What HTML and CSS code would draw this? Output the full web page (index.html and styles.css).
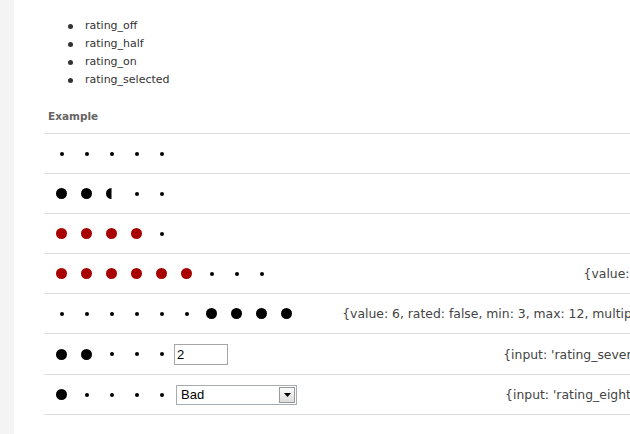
FILE: index.html
```html
<!DOCTYPE html>
<html lang="en">

<head>
    <meta charset="UTF-8">
    <meta name="viewport" content="width=device-width, initial-scale=1.0">
    <title>Rating - Examples</title>
    <link rel="stylesheet" href="styles.css">
</head>

<body>

    <div class="page">
        <!-- left gutter -->
        <div class="gutter"></div>

        <div class="content">
            <p class="intro">To change the look simply style up, by css, only the following four rating classes :</p>

            <ul class="classes">
                <li>rating_off</li>
                <li>rating_half</li>
                <li>rating_on</li>
                <li>rating_selected</li>
            </ul>

            <table class="examples">
                <thead>
                    <tr>
                        <th colspan="2">Example</th>
                    </tr>
                </thead>
                <tbody>
                    <tr>
                        <td>
                            <div class="rating">
                                <span class="dot"></span><span class="dot"></span><span class="dot"></span><span class="dot"></span><span class="dot"></span>
                            </div>
                        </td>
                        <td class="code"></td>
                    </tr>
                    <tr>
                        <td>
                            <div class="rating">
                                <span class="dot on"></span><span class="dot on"></span><span class="dot half"></span><span class="dot"></span><span class="dot"></span>
                            </div>
                        </td>
                        <td class="code"></td>
                    </tr>
                    <tr>
                        <td>
                            <div class="rating">
                                <span class="dot selected"></span><span class="dot selected"></span><span class="dot selected"></span><span class="dot selected"></span><span class="dot"></span>
                            </div>
                        </td>
                        <td class="code"></td>
                    </tr>
                    <tr>
                        <td>
                            <div class="rating">
                                <span class="dot selected"></span><span class="dot selected"></span><span class="dot selected"></span><span class="dot selected"></span><span class="dot selected"></span><span class="dot selected"></span><span class="dot"></span><span class="dot"></span><span class="dot"></span>
                            </div>
                        </td>
                        <td class="code">{value: 6, min: 1, max: 9, rated: true, half: true}</td>
                    </tr>
                    <tr>
                        <td>
                            <div class="rating">
                                <span class="dot"></span><span class="dot"></span><span class="dot"></span><span class="dot"></span><span class="dot"></span><span class="dot"></span><span class="dot on"></span><span class="dot on"></span><span class="dot on"></span><span class="dot on"></span>
                            </div>
                        </td>
                        <td class="code">{value: 6, rated: false, min: 3, max: 12, multiple: true, half: true, increment: 1, tags: 1}</td>
                    </tr>
                    <tr class="with-input">
                        <td>
                            <div class="rating">
                                <span class="dot on"></span><span class="dot on"></span><span class="dot"></span><span class="dot"></span><span class="dot"></span>
                                <input type="text" class="rate-input" value="2">
                            </div>
                        </td>
                        <td class="code">{input: 'rating_seven', value: 2, max: 5, rated: 0, type: 'text'}</td>
                    </tr>
                    <tr>
                        <td>
                            <div class="rating">
                                <span class="dot on"></span><span class="dot"></span><span class="dot"></span><span class="dot"></span><span class="dot"></span>
                                <div class="select-box">
                                    <span class="select-value">Bad</span>
                                    <span class="select-btn">
                                        <svg width="7" height="4" viewBox="0 0 7 4"><path d="M0 0h7L3.5 4z" fill="#000"/></svg>
                                    </span>
                                </div>
                            </div>
                        </td>
                        <td class="code">{input: 'rating_eight', value: 1, max: 5, size: 1, type: 'select'}</td>
                    </tr>
                </tbody>
            </table>
        </div>
    </div>

</body>

</html>
```

FILE: styles.css
```css
html,
body {
    overflow: hidden;
}

body {
    margin: 0;
    padding: 0;
    font-family: "DejaVu Sans", Verdana, sans-serif;
    font-size: 11px;
    color: #333;
    background-color: #fff;
}

.page {
    display: flex;
    min-height: 434px;
}

.gutter {
    width: 14px;
    flex-shrink: 0;
    background-color: #f4f4f4;
}

.content {
    flex: 1;
    padding-left: 30px;
}

/* page is scrolled down a little, only the descenders of this line show */
.intro {
    margin: -14px 0 0 0;
    line-height: 18px;
    white-space: nowrap;
}

.classes {
    list-style: none;
    margin: 13px 0 14px;
    padding-left: 41px;
}

.classes li {
    display: flex;
    align-items: center;
    line-height: 18px;
}

.classes li::before {
    content: "";
    width: 5px;
    height: 5px;
    border-radius: 50%;
    background-color: #333;
    margin-left: -17px;
    margin-right: 12px;
}

.examples {
    border-collapse: collapse;
    width: 852px;
}

.examples th {
    text-align: left;
    font-size: 10.5px;
    font-weight: bold;
    color: #666;
    line-height: 14px;
    padding: 6px 4px 10px;
    border-bottom: 1px solid #ddd;
}

.examples td {
    height: 39px;
    padding: 0;
    border-bottom: 1px solid #ddd;
    vertical-align: middle;
}

.examples .with-input td {
    height: 40px;
}

.rating {
    display: flex;
    align-items: center;
    padding-left: 5px;
}

.examples td.code {
    text-align: right;
    white-space: nowrap;
    font-size: 12.4px;
    color: #444;
    padding-right: 10px;
}

/* rating dots */
.dot {
    display: flex;
    justify-content: center;
    align-items: center;
    flex-shrink: 0;
    width: 25px;
    height: 12px;
}

.dot::before {
    content: "";
    width: 4px;
    height: 4px;
    border-radius: 50%;
    background-color: #000;
}

.dot.on::before,
.dot.half::before {
    width: 11px;
    height: 11px;
}

.dot.half::before {
    clip-path: inset(0 50% 0 0);
}

.dot.selected::before {
    width: 11px;
    height: 11px;
    background-color: #a80000;
}

.rate-input {
    box-sizing: border-box;
    width: 54px;
    height: 21px;
    margin: 0;
    padding: 0 2px;
    border: 1px solid #a5a5a5;
    font-family: "Liberation Sans", Arial, sans-serif;
    font-size: 13px;
    color: #000;
}

.select-box {
    display: flex;
    align-items: stretch;
    justify-content: space-between;
    box-sizing: border-box;
    width: 121px;
    height: 20px;
    margin-left: 2px;
    border: 1px solid #a5acb2;
    background-color: #fff;
}

.select-value {
    font-family: "Liberation Sans", Arial, sans-serif;
    font-size: 13px;
    color: #000;
    line-height: 18px;
    padding-left: 4px;
}

.select-btn {
    display: flex;
    align-items: center;
    justify-content: center;
    width: 16px;
    margin: 1px;
    box-sizing: border-box;
    border: 1px solid #9a9a9a;
    background: linear-gradient(#fcfcfc, #dcdcdc);
}
```
